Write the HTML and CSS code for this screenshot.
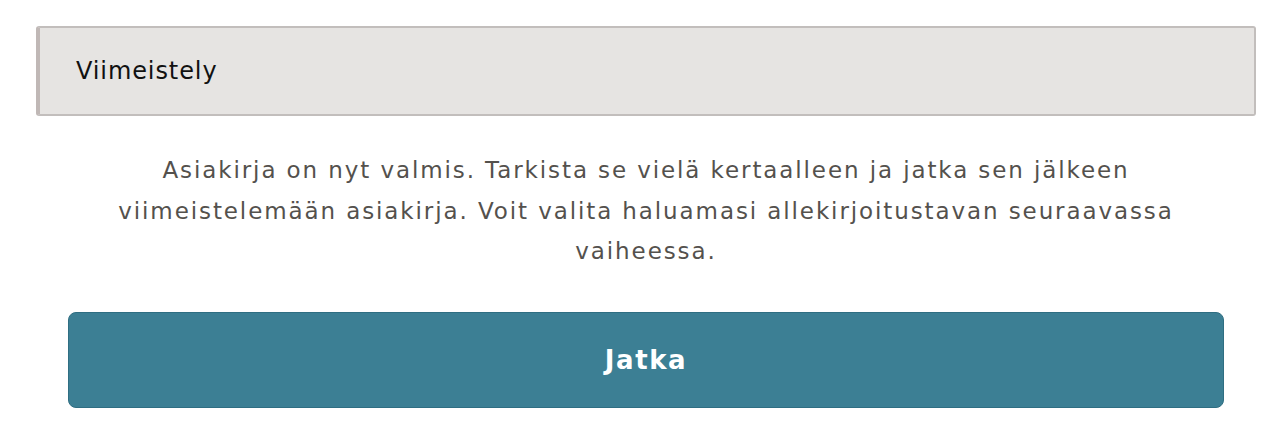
FILE: index.html
```html
<!DOCTYPE html>
<html lang="fi">
<head>
<meta charset="utf-8">
<link rel="stylesheet" href="styles.css">
</head>
<body>
<div class="page">
  <div class="step-header">Viimeistely</div>
  <p class="intro">Asiakirja on nyt valmis. Tarkista se vielä kertaalleen ja jatka sen jälkeen viimeistelemään asiakirja. Voit valita haluamasi allekirjoitustavan seuraavassa vaiheessa.</p>
  <button class="continue">Jatka</button>
</div>
</body>
</html>
```
FILE: styles.css
```css
html, body {
  margin: 0;
  padding: 0;
  background: #ffffff;
}
body {
  font-family: "DejaVu Sans", Inter, sans-serif;
}
.page {
  padding: 26px 30px 0 36px;
  display: flex;
  flex-direction: column;
}
.step-header {
  box-sizing: border-box;
  height: 90px;
  display: flex;
  align-items: center;
  padding-left: 36px;
  background: #e6e4e2;
  border: 2px solid #c2bebc;
  border-left: 4px solid #c0b8b6;
  border-radius: 3px;
  font-size: 24px;
  letter-spacing: 0.9px;
  color: #111111;
}
.intro {
  margin: 34px 52px 0 52px;
  text-align: center;
  font-size: 23px;
  letter-spacing: 1.9px;
  line-height: 40.5px;
  color: #54514d;
}
.continue {
  margin: 40px 32px 0 32px;
  height: 96px;
  padding-left: 6px;
  background: #3c7f94;
  border: 1px solid #2f6e82;
  border-radius: 8px;
  color: #ffffff;
  font-family: inherit;
  font-size: 26px;
  font-weight: 700;
  letter-spacing: 1.6px;
  cursor: pointer;
}
```
